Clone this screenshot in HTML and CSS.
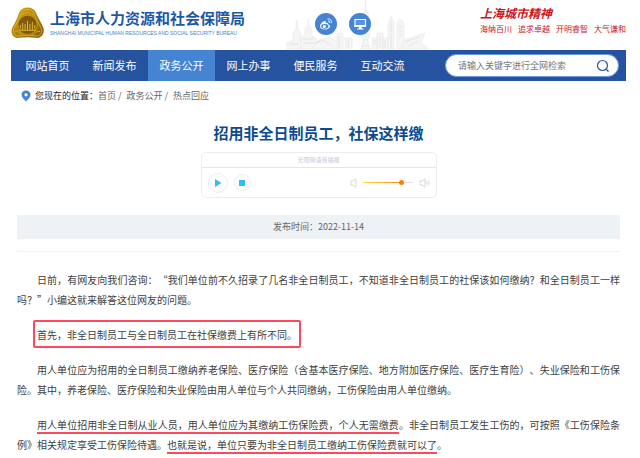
FILE: index.html
```html
<!DOCTYPE html>
<html lang="zh-CN">
<head>
<meta charset="utf-8">
<meta name="viewport" content="width=device-width, initial-scale=1">
<title>招用非全日制员工，社保这样缴</title>
<link rel="stylesheet" href="styles.css">
</head>
<body>
<div class="page">
  <header class="header">
    <div class="brand">
      <svg class="emblem" viewBox="0 0 34 32" aria-hidden="true">
        <defs>
          <linearGradient id="gold" x1="0" y1="0" x2="1" y2="1">
            <stop offset="0" stop-color="#d9ae1c"/>
            <stop offset=".45" stop-color="#b5860c"/>
            <stop offset="1" stop-color="#7c570a"/>
          </linearGradient>
        </defs>
        <path d="M17 0C21 0 24 2 25.500 5C27 9 30 14 33 20C35 25 33 30 28 31.500C21 30.500 13 30.500 6 31.500C1 30 -1 25 1.500 20.500C5 15 7 9 8.500 5C10 2 13 0 17 0Z" fill="url(#gold)"/>
        <path d="M17 2C20 2 22.500 3.500 23.500 6C25.500 11 28 16 31 21C32.500 25 31 28.500 27.500 29.500C21 28.500 13 28.500 6.500 29.500C3 28.500 1.500 25 3 21.500C6 16 9 11 10.500 6C11.500 3.500 14 2 17 2Z" fill="none" stroke="#e0bb2c" stroke-width=".8"/>
        <circle cx="17" cy="18" r="10" fill="#80590d" stroke="#c59a1c"/>
        <path d="M9.500 22V18M12 23V16M14.500 23V17M17 23V14M19.500 23V17M22 23V15M24.500 22V18M8 23.500H26" stroke="#e2bd3b" fill="none"/>
        <path d="M11 8C15 4.500 19 4.500 23 8M4 25C8 23 8 27 12 28M30 25C26 23 26 27 22 28" stroke="#d4ae22" fill="none"/>
      </svg>
      <div>
        <div class="brand-name">上海市人力资源和社会保障局</div>
        <div class="brand-en">SHANGHAI MUNICIPAL HUMAN RESOURCES AND SOCIAL SECURITY BUREAU</div>
      </div>
    </div>
    <div class="city">
      <svg class="skyline" viewBox="0 0 144 50" aria-hidden="true">
        <g fill="#f5f5f6" stroke="#e6e7e9" stroke-width=".6">
          <path d="M2 49V43L8 40V34L11 29V22L12 20L13 29L16 34V49Z"/>
          <path d="M16 49V38L20 35V29L23 25V19L24 25L27 29V36L32 39V49Z"/>
          <path d="M26 49L34 40L45 37L57 45V49Z"/>
          <path d="M52 49V33H58V49M60 49V38H67V49"/>
          <path d="M76 49L79 37V21H80V8L80.500 0L81 8V21H82V37L85 49Z"/>
          <circle cx="80.500" cy="15" r="3"/>
          <circle cx="80.500" cy="35" r="4.500"/>
          <path d="M87 49V38H92V49M92 49V33H98V49M98 49V38H103V49"/>
          <path d="M103 49V23L106 16L109 23V49Z"/>
          <path d="M112 49V24L114 20H117L119 24V49Z"/>
          <path d="M119 40L140 33L136 43L143 49H117Z"/>
        </g>
        <path d="M4 44H14M18 39H29M18 43H30M31 43L38 40L47 46M54 36V48M63 40V48M77 46H84M88 41H91M88 44H91M95 36V48M100 40V48M106 20V48M114 27H117M114 31H117M114 35H117M120 42L134 37M124 46L133 41" fill="none" stroke="#dfe0e2" stroke-width=".8"/>
      </svg>
      <div class="shortcuts">
        <a class="round" href="#" aria-label="微博">
          <svg viewBox="0 0 22 22" aria-hidden="true">
            <path d="M10.500 8C8.500 7.500 5 11 5 13.200C5 17.500 15 17.500 15 13.300C15 12.300 14.200 11.700 13.200 11.500C13.600 10 12.500 9.500 10.700 10.200C11 9 11 8.200 10.500 8Z" fill="#fff"/>
            <ellipse cx="9.800" cy="13.300" rx="3.600" ry="2.400" fill="#4583d3"/>
            <circle cx="9.300" cy="13.600" r="1.500" fill="#fff"/>
            <path d="M13 6C15.500 5.500 17 7.500 16.300 9.800M13.300 8C14.400 7.800 15 8.500 14.700 9.500" fill="none" stroke="#fff" stroke-linecap="round"/>
          </svg>
        </a>
        <a class="round" href="#" aria-label="电脑版">
          <svg viewBox="0 0 22 22" aria-hidden="true">
            <path d="M6 6.500H16.500V13.500H6Z" fill="#5b8fe0" stroke="#fff" stroke-width="1.200"/>
            <path d="M5.500 12H17V14H5.500ZM10 14H12.500V15.500H14.500V16.500H8V15.500H10Z" fill="#fff"/>
          </svg>
        </a>
      </div>
    </div>
    <div class="spirit">
      <div class="spirit-title">上海城市精神</div>
      <div class="spirit-words"><span>海纳百川</span><span>追求卓越</span><span>开明睿智</span><span>大气谦和</span></div>
    </div>
  </header>

  <nav class="nav">
    <a href="#">网站首页</a>
    <a href="#">新闻发布</a>
    <a href="#" class="active">政务公开</a>
    <a href="#">网上办事</a>
    <a href="#">便民服务</a>
    <a href="#">互动交流</a>
    <form class="search">
      <input type="text" aria-label="全网检索" placeholder="请输入关键字进行全网检索">
      <button type="button" aria-label="搜索">
        <svg viewBox="0 0 14 14" aria-hidden="true"><circle cx="6.500" cy="6.500" r="5" fill="none" stroke="#2653a0" stroke-width="1.200"/><path d="M10.500 10.500L12.500 12.500" stroke="#2653a0" stroke-width="1.400"/></svg>
      </button>
    </form>
  </nav>

  <div class="crumbs">
    <svg viewBox="0 0 10 12" aria-hidden="true"><path d="M5 .5C2.300 .5 .5 2.400 .5 4.800C.5 7.500 3 9.200 5 11.500C7 9.200 9.500 7.500 9.500 4.800C9.500 2.400 7.700 .5 5 .5Z" fill="#4583d3"/><circle cx="5" cy="4.800" r="1.600" fill="#fff"/></svg>
    <span class="crumbs-label">您现在的位置：</span>
    <a href="#">首页</a><span class="sep">/</span><a href="#">政务公开</a><span class="sep">/</span><a href="#">热点回应</a>
  </div>

  <main class="article">
    <h1>招用非全日制员工，社保这样缴</h1>
    <section class="player">
      <div class="player-title">无障碍语音播报</div>
      <div class="player-bar">
        <button type="button" class="play" aria-label="播放"><svg viewBox="0 0 8 8" aria-hidden="true"><path d="M1 0L7.500 4L1 8Z" fill="#2fbdf9"/></svg></button>
        <button type="button" class="stop" aria-label="停止"><svg viewBox="0 0 8 8" aria-hidden="true"><path d="M1 1H7V7H1Z" fill="#2fbdf9"/></svg></button>
        <svg class="speaker first" viewBox="0 0 11 10" aria-hidden="true"><path d="M3 3H5L8 .8V9.200L5 7H3Z"/></svg>
        <input type="range" class="volume" aria-label="音量" min="0" max="100" value="80">
        <svg class="speaker" viewBox="0 0 11 10" aria-hidden="true"><path d="M1 3H3L6 .8V9.200L3 7H1ZM7.500 3.500Q8.500 5 7.500 6.500M9.300 2.300Q11 5 9.300 7.700"/></svg>
      </div>
    </section>
    <div class="meta">发布时间：2022-11-14</div>
    <div class="content">
      <p>日前，有网友向我们咨询：“我们单位前不久招录了几名非全日制员工，不知道非全日制员工的社保该如何缴纳？和全日制员工一样吗？”小编这就来解答这位网友的问题。</p>
      <p><span class="boxed">首先，非全日制员工与全日制员工在社保缴费上有所不同。</span></p>
      <p>用人单位应为招用的全日制员工缴纳养老保险、医疗保险（含基本医疗保险、地方附加医疗保险、医疗生育险）、失业保险和工伤保险。其中，养老保险、医疗保险和失业保险由用人单位与个人共同缴纳，工伤保险由用人单位缴纳。</p>
      <p><span class="marked">用人单位招用非全日制从业人员，用人单位应为其缴纳工伤保险费，个人无需缴费</span>。非全日制员工发生工伤的，可按照《工伤保险条例》相关规定享受工伤保险待遇。<span class="marked">也就是说，单位只要为非全日制员工缴纳工伤保险费就可以了</span>。</p>
    </div>
  </main>
</div>
</body>
</html>
```
FILE: styles.css
```css
* {
  box-sizing: border-box;
}

body {
  margin: 0;
  background: #fff;
  color: #404040;
  font-family: "Noto Sans CJK SC", sans-serif;
  font-size: 10px;
  line-height: 20px;
  text-spacing-trim: space-all;
}

a {
  color: inherit;
  text-decoration: none;
}

button {
  padding: 0;
  border: 0;
  background: none;
}

svg {
  display: block;
}

.page {
  padding: 0 14px 0 11px;
}

/* Header */
.header {
  display: flex;
  justify-content: space-between;
  height: 50px;
}

.brand {
  display: flex;
  gap: 6px;
  padding-top: 7px;
}

.emblem {
  width: 33px;
  height: 32px;
}

.brand-name {
  color: #1c58a8;
  font-size: 15px;
  font-weight: 700;
  line-height: 22px;
  white-space: nowrap;
}

.brand-en {
  color: #4c7fc0;
  font-family: "Liberation Sans", sans-serif;
  font-size: 5px;
  line-height: 8px;
  white-space: nowrap;
}

.city {
  display: grid;
  margin-right: 12px;
}

.city > * {
  grid-area: 1 / 1;
}

.skyline {
  width: 144px;
  height: 50px;
}

.shortcuts {
  display: flex;
  gap: 12px;
  padding: 13px 0 0 30px;
}

.round {
  width: 22px;
  height: 22px;
  border-radius: 50%;
  background: #4583d3;
}

.spirit {
  padding-top: 4px;
  color: #c8161d;
  white-space: nowrap;
}

.spirit-title {
  font-size: 12px;
  font-style: italic;
  font-weight: 700;
  line-height: 17px;
}

.spirit-words {
  display: flex;
  gap: 6px;
  font-size: 8px;
  line-height: 16px;
}

/* Navigation */
.nav {
  display: flex;
  align-items: center;
  height: 31px;
  padding: 0 7px 0 3px;
  background: #2653a0;
  color: #fff;
  font-size: 11px;
}

.nav > a {
  width: 67px;
  line-height: 31px;
  text-align: center;
}

.nav .active {
  background: #4583d3;
}

.search {
  display: flex;
  align-items: center;
  width: 174px;
  height: 23px;
  margin-left: auto;
  padding: 0 8px 0 12px;
  border: 1px solid #6c9be0;
  border-radius: 12px;
  background: #fff;
}

.search input {
  flex: 1;
  min-width: 0;
  padding: 0;
  border: 0;
  outline: 0;
  background: none;
  font-family: inherit;
  font-size: 9px;
}

.search input::placeholder {
  color: #777;
}

.search button,
.search svg {
  width: 14px;
  height: 14px;
}

/* Breadcrumbs */
.crumbs {
  display: flex;
  align-items: center;
  height: 29px;
  padding-left: 10px;
  color: #666;
  font-size: 9px;
}

.crumbs svg {
  width: 10px;
  height: 12px;
  margin-right: 4px;
}

.crumbs-label {
  color: #222;
}

.sep {
  padding: 0 5px 0 2px;
}

/* Article */
.article {
  padding: 0 6px;
}

h1 {
  margin: 11px 0 7px;
  color: #0b4c8f;
  font-size: 15px;
  line-height: 24px;
  text-align: center;
}

.player {
  width: 236px;
  margin: 0 auto;
  border: 1px solid #ececf2;
  border-radius: 5px;
}

.player-title {
  border-bottom: 1px solid #dfe7f5;
  color: #cacad8;
  font-size: 6px;
  line-height: 14px;
  text-align: center;
}

.player-bar {
  display: flex;
  align-items: center;
  height: 29px;
  padding: 0 6px;
}

.play,
.stop {
  display: grid;
  place-items: center;
  border: 1px solid #e9edf3;
  border-radius: 50%;
}

.play {
  width: 20px;
  height: 20px;
  margin-right: 6px;
}

.stop {
  width: 17px;
  height: 17px;
}

.play svg,
.stop svg {
  width: 8px;
  height: 8px;
}

.speaker {
  width: 11px;
  height: 10px;
  fill: none;
  stroke: #cdcdd3;
  stroke-width: .8;
}

.first {
  margin-left: auto;
}

.volume {
  width: 50px;
  height: 10px;
  margin: 0 6px 0 4px;
  appearance: none;
  background: linear-gradient(90deg, #f9dc4a, #ff8a10 78%, #e3e3e8 78%) center / 100% 1px no-repeat;
}

.volume::-webkit-slider-thumb {
  width: 5px;
  height: 5px;
  appearance: none;
  border-radius: 50%;
  background: #ff7e00;
}

.meta {
  margin-top: 17px;
  background: #eef2f5;
  color: #666;
  font-size: 9px;
  line-height: 24px;
  text-align: center;
}

.content {
  margin-top: 12px;
  padding-top: 18px;
  border-top: 1px solid #f0f0f0;
  text-align: justify;
}

.content p {
  margin: 0 0 15px;
  text-indent: 20px;
}

.boxed {
  margin: 0 -4px;
  padding: 5px 2px 4px;
  border: 2px solid #fb4a5e;
  border-radius: 2px;
}

.marked {
  border-bottom: 2px solid #fb4a5e;
}
```
